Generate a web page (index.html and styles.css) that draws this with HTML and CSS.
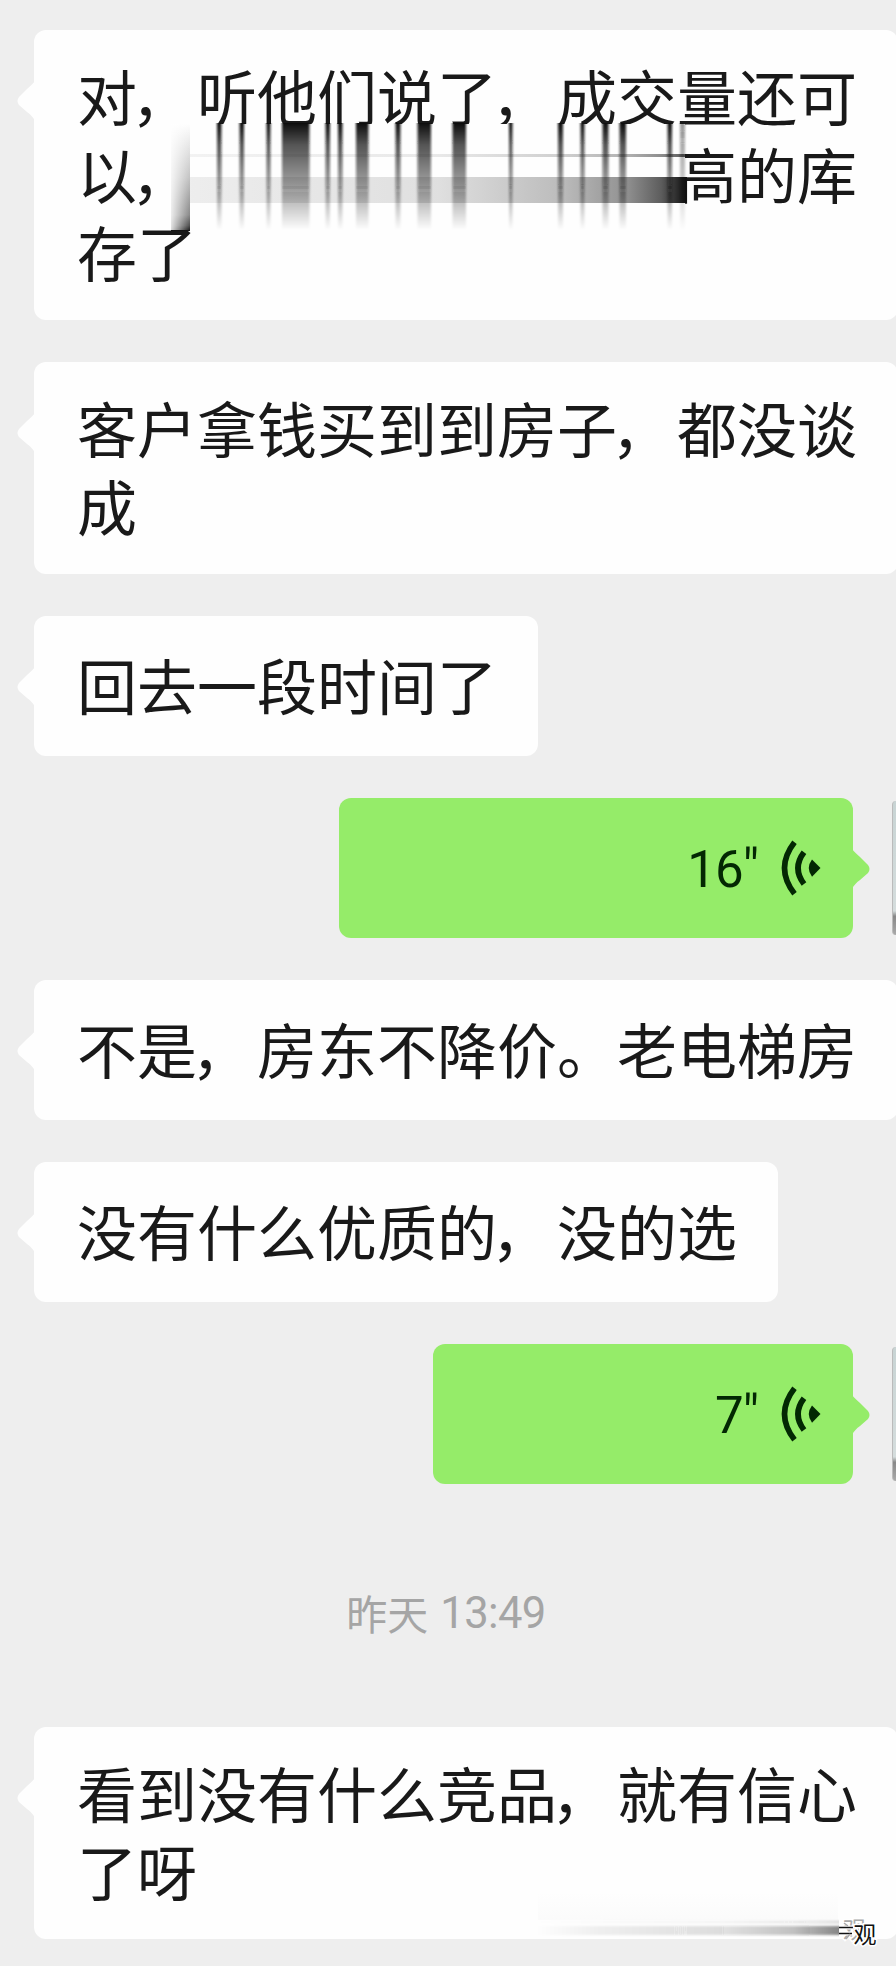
FILE: index.html
```
<!DOCTYPE html>
<html lang="zh-CN">
<head>
<meta charset="utf-8">
<title>聊天</title>
<link rel="stylesheet" href="styles.css">
</head>
<body>
<svg class="defs" width="0" height="0" aria-hidden="true">
  <symbol id="voice" viewBox="0 0 40 58">
    <path d="M13.5 3.2Q-6.5 29 13.5 54.8" fill="none" stroke="#032803" stroke-width="5.6"/>
    <path d="M23 13.2Q11 29 23 45" fill="none" stroke="#032803" stroke-width="5.8"/>
    <path d="M31 20.500L39.500 29L31 37.700Q24.500 29 31 20.500Z" fill="#032803"/>
  </symbol>
  <symbol id="tail" viewBox="0 0 18 40">
    <path d="M18 0C16 3 13 5 10 8L2 16Q-1 20 2 24L10 31C14 34 16 36 18 40Z" fill="currentColor"/>
  </symbol>
</svg>
<main class="chat">
  <section class="bubble">
    <svg class="tail"><use href="#tail"/></svg>
    <p class="text">对<span class="comma">，</span>听他们说了<span class="comma">，</span>成交量还可<br>以<span class="comma">，</span><span class="hidden-run"></span>高的库<br>存了</p>
    <svg class="smear" viewBox="170 120 520 114">
      <defs>
        <linearGradient id="down" x1="0" y1="123" x2="0" y2="230" gradientUnits="userSpaceOnUse">
          <stop offset="0" stop-color="#111"/><stop offset=".2" stop-color="#111" stop-opacity=".72"/><stop offset=".55" stop-color="#111" stop-opacity=".43"/><stop offset="1" stop-color="#111" stop-opacity="0"/>
        </linearGradient>
        <linearGradient id="up" x1="0" y1="124" x2="0" y2="231" gradientUnits="userSpaceOnUse">
          <stop offset="0" stop-color="#111" stop-opacity="0"/><stop offset=".5" stop-color="#111" stop-opacity=".25"/><stop offset=".85" stop-color="#111" stop-opacity=".5"/><stop offset=".95" stop-color="#111" stop-opacity=".75"/><stop offset="1" stop-color="#111"/>
        </linearGradient>
        <linearGradient id="across" x1="190" y1="0" x2="686" y2="0" gradientUnits="userSpaceOnUse">
          <stop offset="0" stop-color="#111" stop-opacity=".07"/><stop offset=".5" stop-color="#111" stop-opacity=".13"/><stop offset=".75" stop-color="#111" stop-opacity=".28"/><stop offset=".88" stop-color="#111" stop-opacity=".46"/><stop offset=".95" stop-color="#111" stop-opacity=".68"/><stop offset="1" stop-color="#111"/>
        </linearGradient>
        <linearGradient id="fadein" x1="171" y1="0" x2="190" y2="0" gradientUnits="userSpaceOnUse">
          <stop offset="0" stop-color="#fff" stop-opacity=".85"/><stop offset="1" stop-color="#fff" stop-opacity="0"/>
        </linearGradient>
        <filter id="soft" x="-5%" y="0" width="110%" height="100%"><feGaussianBlur stdDeviation="1 0"/></filter>
      </defs>
      <path d="M190 124H685V230H190Z" fill="#fefefe"/>
      <path d="M171 124H190V231H171Z" fill="url(#up)"/>
      <path d="M171 124H190V230H171Z" fill="url(#fadein)"/>
      <path d="M190 177H687V203H190Z" fill="url(#across)"/>
      <path d="M190 154H685V157H190Z" fill="url(#across)" opacity=".7"/>
      <g fill="url(#down)" filter="url(#soft)">
        <path d="M217 123h4.500v107h-4.500zM239.500 123h4.500v107h-4.500zM266.500 123h4v107h-4zM282 123h27.500v107h-27.500zM325.500 123h4.500v107h-4.500zM338 123h4.500v107h-4.500zM356 123h12.500v107h-12.500zM395.500 123h5v107h-5zM417.500 123h13.500v107h-13.500z"/>
        <path d="M452.500 123h13.500v107h-13.500zM509 123h3.500v107h-3.500zM558 123h5v107h-5zM580.500 123h4v107h-4zM602.500 123h6v107h-6zM619.500 123h6.500v107h-6.500zM667.500 123h4.500v107h-4.500z"/>
        <path d="M680 123h5v107h-5z" opacity=".45"/>
      </g>
    </svg>
  </section>

  <section class="bubble">
    <svg class="tail"><use href="#tail"/></svg>
    <p class="text">客户拿钱买到到房子<span class="comma">，</span>都没谈<br>成</p>
  </section>

  <section class="bubble">
    <svg class="tail"><use href="#tail"/></svg>
    <p class="text">回去一段时间了</p>
  </section>

  <div class="sent">
    <section class="voice voice-long">
      <span class="length">16<span class="quote">"</span></span>
      <svg class="waves"><use href="#voice"/></svg>
      <svg class="tail"><use href="#tail"/></svg>
    </section>
    <div class="avatar"></div>
  </div>

  <section class="bubble">
    <svg class="tail"><use href="#tail"/></svg>
    <p class="text">不是<span class="comma">，</span>房东不降价。老电梯房</p>
  </section>

  <section class="bubble">
    <svg class="tail"><use href="#tail"/></svg>
    <p class="text">没有什么优质的<span class="comma">，</span>没的选</p>
  </section>

  <div class="sent">
    <section class="voice voice-short">
      <span class="length">7<span class="quote">"</span></span>
      <svg class="waves"><use href="#voice"/></svg>
      <svg class="tail"><use href="#tail"/></svg>
    </section>
    <div class="avatar"></div>
  </div>

  <div class="time"><span>昨天</span><span class="clock">13:49</span></div>

  <section class="bubble">
    <svg class="tail"><use href="#tail"/></svg>
    <p class="text">看到没有什么竞品<span class="comma">，</span>就有信心<br>了呀</p>
  </section>

  <svg class="watermark" viewBox="530 1890 366 76">
    <defs>
      <linearGradient id="wm" x1="536" y1="0" x2="840" y2="0" gradientUnits="userSpaceOnUse">
        <stop offset="0" stop-color="#222" stop-opacity="0"/><stop offset=".2" stop-color="#222" stop-opacity=".06"/><stop offset=".6" stop-color="#222" stop-opacity=".13"/><stop offset=".85" stop-color="#222" stop-opacity=".28"/><stop offset="1" stop-color="#222" stop-opacity=".55"/>
      </linearGradient>
      <linearGradient id="haze" x1="0" y1="1892" x2="0" y2="1920" gradientUnits="userSpaceOnUse">
        <stop offset="0" stop-color="#ddd" stop-opacity="0"/><stop offset="1" stop-color="#ddd" stop-opacity=".1"/>
      </linearGradient>
      <filter id="wmsoft" x="-2%" y="-20%" width="104%" height="140%"><feGaussianBlur stdDeviation="0 .8"/></filter>
    </defs>
    <path d="M538 1892H838V1920H538Z" fill="url(#haze)"/>
    <g fill="url(#wm)" filter="url(#wmsoft)">
      <path d="M536 1926H839V1935H536Z"/>
      <path d="M536 1921H839V1923H536Z" opacity=".4"/>
    </g>
    <text class="ghost" x="843" y="1938">观</text>
    <path d="M839 1927.500H853M839 1933.500H853" stroke="#fff" stroke-width="4"/>
    <path d="M839 1927.500H853M839 1933.500H852" stroke="#111" stroke-width="1.700"/>
    <path d="M844 1923L848 1926M850 1934L846 1939" stroke="#aaa" stroke-width="1.500"/>
    <text class="mark" x="853.500" y="1943">观</text>
  </svg>
</main>
</body>
</html>
```
FILE: styles.css
```
* { box-sizing: border-box; }

body {
  margin: 0;
  background: #eee;
  font-family: "Noto Sans CJK SC", sans-serif;
  color: #191919;
}

.defs { position: absolute; }

.chat {
  position: relative;
  display: flex;
  flex-direction: column;
  align-items: flex-start;
  gap: 42px;
  width: 896px;
  height: 1966px;
  padding: 30px 0 0 34px;
  overflow: hidden;
}

.bubble {
  position: relative;
  display: flex;
  flex: none;
  align-items: center;
  min-height: 140px;
  padding: 26px 41px 30px 43px;
  border-radius: 12px;
  background: #fefefe;
  color: #fefefe;
}

.text {
  margin: 0;
  color: #191919;
  font-size: 60px;
  line-height: 78px;
  white-space: nowrap;
}

/* Commas hug the preceding character while keeping a full-width advance. */
.comma { margin: 0 6px 0 -6px; }

.hidden-run {
  display: inline-block;
  width: 480px;
}

.tail {
  position: absolute;
  top: 51px;
  left: -17px;
  width: 18px;
  height: 40px;
}

.smear {
  position: absolute;
  top: 90px;
  left: 136px;
  width: 520px;
  height: 114px;
}

.sent {
  display: flex;
  flex: none;
  align-self: stretch;
  align-items: center;
  justify-content: flex-end;
  gap: 39px;
}

.voice {
  position: relative;
  display: flex;
  align-items: center;
  justify-content: flex-end;
  gap: 22px;
  height: 140px;
  padding-right: 32px;
  border-radius: 12px;
  background: #95ec69;
  color: #95ec69;
}

.voice-long { width: 514px; }
.voice-short { width: 420px; }

.voice .tail {
  left: auto;
  right: -17px;
  transform: scaleX(-1);
}

.length {
  display: flex;
  padding-top: 3px;
  color: #032803;
  font-family: Roboto, sans-serif;
  font-size: 51px;
  letter-spacing: -1px;
  line-height: 60px;
}

.quote {
  margin-top: -1px;
  letter-spacing: 0;
}

.waves {
  width: 40px;
  height: 58px;
}

.avatar {
  width: 4px;
  height: 134px;
  border-left: 1px solid #bbb;
  border-radius: 4px 0 0 4px;
  background: linear-gradient(#c8d4d4, #d5dddd 82%, #888 86%, #aaa);
}

.time {
  display: flex;
  flex: none;
  align-items: center;
  align-self: stretch;
  justify-content: center;
  gap: 12px;
  height: 159px;
  padding: 13px 38px 0 0;
  color: #a5a5a5;
  font-size: 41px;
  line-height: 60px;
}

.clock {
  padding-top: 4px;
  font-family: Roboto, sans-serif;
  font-size: 43.500px;
  letter-spacing: -.6px;
}

.watermark {
  position: absolute;
  left: 530px;
  top: 1890px;
  width: 366px;
  height: 76px;
}

.mark, .ghost {
  font-size: 23px;
  stroke: #fff;
  stroke-width: 3px;
  paint-order: stroke;
}

.mark { fill: #111; font-weight: 400; }
.ghost { fill: #aaa; }
```
